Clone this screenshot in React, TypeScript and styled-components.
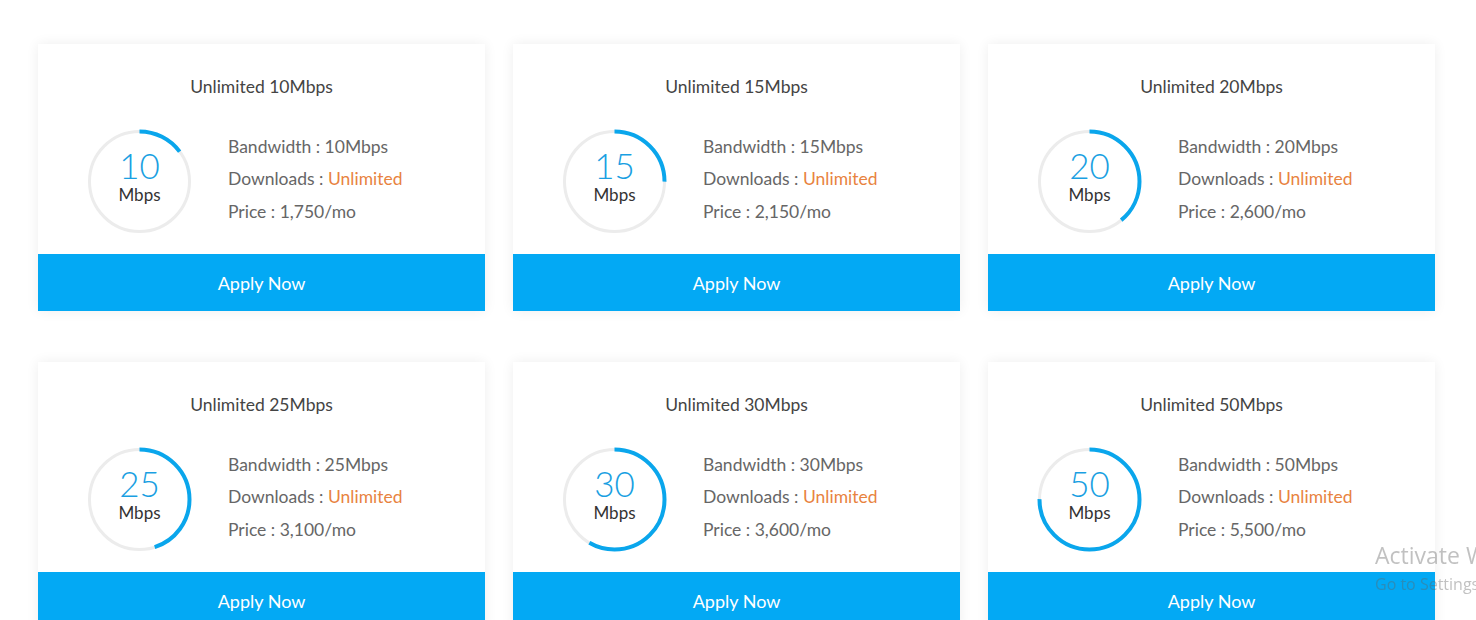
import React from "react";
import styled, { createGlobalStyle } from "styled-components";

const Global = createGlobalStyle`
  html, body { margin: 0; padding: 0; background: #fff; overflow: hidden; }
  body { font-family: Lato, "Open Sans", sans-serif; }
`;

const Page = styled.div`
  padding: 44px 0 0 38px;
  width: 1476px;
  height: 620px;
  box-sizing: border-box;
`;

const Grid = styled.div`
  display: grid;
  grid-template-columns: repeat(3, 447px);
  column-gap: 28px;
  row-gap: 51px;
`;

const Card = styled.div`
  background: #fff;
  box-shadow: 0 0 12px rgba(0, 0, 0, 0.07);
  display: flex;
  flex-direction: column;
`;

const Title = styled.div`
  text-align: center;
  font-size: 17.5px;
  color: #444;
  line-height: 22px;
  padding-top: 32px;
`;

const Body = styled.div`
  display: flex;
  align-items: center;
  padding: 31px 0 20px 49px;
  gap: 36px;
`;

const Ring = styled.div`
  position: relative;
  width: 105px;
  height: 105px;
  flex: none;
`;

const RingLabel = styled.div`
  position: absolute;
  inset: 0;
  display: flex;
  flex-direction: column;
  align-items: center;
  justify-content: center;
  gap: 5px;
  padding-bottom: 8px;
`;

const Num = styled.div`
  font-size: 35px;
  line-height: 30px;
  color: #1a9fe2;
  font-weight: 300;
`;

const Unit = styled.div`
  font-size: 17px;
  line-height: 20px;
  color: #333;
`;

const Details = styled.div`
  display: flex;
  flex-direction: column;
  padding-bottom: 4px;
`;

const Line = styled.div`
  font-size: 17.5px;
  line-height: 32.5px;
  color: #666;
`;

const Orange = styled.span`
  color: #e8833f;
`;

const Button = styled.button`
  border: none;
  background: #03a9f4;
  color: #fff;
  height: 57px;
  font-family: inherit;
  font-size: 18px;
  cursor: pointer;
  width: 100%;
`;

const Watermark = styled.div`
  position: fixed;
  left: 1375px;
  top: 538px;
  white-space: nowrap;
  font-family: "Open Sans", "Liberation Sans", sans-serif;
  color: rgba(100, 100, 100, 0.4);
  pointer-events: none;
`;

const WmTitle = styled.div`
  font-size: 23px;
  line-height: 34px;
`;

const WmSub = styled.div`
  font-size: 16px;
  line-height: 24px;
`;

const plans = [
  { speed: 10, price: "1,750", pct: 0.148 },
  { speed: 15, price: "2,150", pct: 0.25 },
  { speed: 20, price: "2,600", pct: 0.39 },
  { speed: 25, price: "3,100", pct: 0.45 },
  { speed: 30, price: "3,600", pct: 0.583 },
  { speed: 50, price: "5,500", pct: 0.75 },
];

const R = 50;
const C = 2 * Math.PI * R;

function Gauge({ speed, pct }: { speed: number; pct: number }) {
  return (
    <Ring>
      <svg width="105" height="105" viewBox="0 0 105 105">
        <circle cx="52.5" cy="52.5" r={R} fill="none" stroke="#ececec" strokeWidth="3" />
        <circle
          cx="52.5"
          cy="52.5"
          r={R}
          fill="none"
          stroke="#0aa6ec"
          strokeWidth="4"
          strokeDasharray={`${C * pct} ${C}`}
          transform="rotate(-90 52.5 52.5)"
        />
      </svg>
      <RingLabel>
        <Num>{speed}</Num>
        <Unit>Mbps</Unit>
      </RingLabel>
    </Ring>
  );
}

export default function App() {
  return (
    <Page>
      <Global />
      <Grid>
        {plans.map((p) => (
          <Card key={p.speed}>
            <Title>Unlimited {p.speed}Mbps</Title>
            <Body>
              <Gauge speed={p.speed} pct={p.pct} />
              <Details>
                <Line>Bandwidth : {p.speed}Mbps</Line>
                <Line>
                  Downloads : <Orange>Unlimited</Orange>
                </Line>
                <Line>Price : {p.price}/mo</Line>
              </Details>
            </Body>
            <Button>Apply Now</Button>
          </Card>
        ))}
      </Grid>
      <Watermark>
        <WmTitle>Activate Windows</WmTitle>
        <WmSub>Go to Settings to activate Windows.</WmSub>
      </Watermark>
    </Page>
  );
}
